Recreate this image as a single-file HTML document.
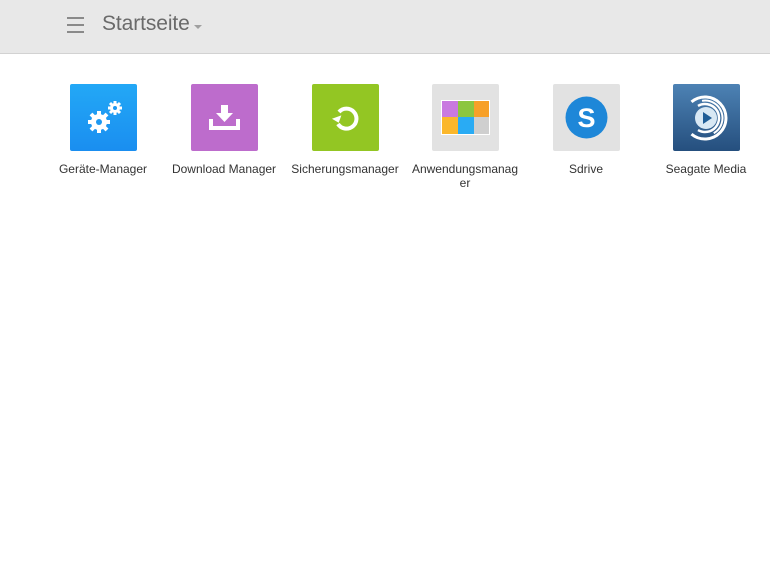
<!DOCTYPE html>
<html><head><meta charset="utf-8"><style>
*{margin:0;padding:0;box-sizing:border-box}
body{width:770px;height:578px;background:#fff;font-family:"Liberation Sans",Arial,sans-serif;overflow:hidden;position:relative}
.hdr{position:absolute;left:0;top:0;width:770px;height:54px;background:#e8e8e8;border-bottom:1px solid #d2d2d2}
.hb{position:absolute;left:67px;top:17px;width:17px}
.hb i{display:block;height:2px;background:#8a8a8a;margin-bottom:5px}
.title{position:absolute;left:102px;top:12px;font-size:21px;color:#6a6a6a;letter-spacing:-0.1px}
.caret{position:absolute;left:194px;top:25px;width:0;height:0;border-left:4px solid transparent;border-right:4px solid transparent;border-top:4px solid #a0a0a0}
.app{position:absolute;top:84px;width:120px;text-align:center}
.ic{width:67px;height:67px;margin:0 auto;border-radius:2px;position:relative;overflow:hidden}
.lb{font-size:12px;color:#333;margin-top:11px;line-height:14px;width:110px;margin-left:5px;word-break:break-all}
</style></head><body>
<div class="hdr">
<div class="hb"><i></i><i></i><i></i></div>
<div class="title">Startseite</div>
<div class="caret"></div>
</div>

<div class="app" style="left:43px"><div class="ic" style="background:linear-gradient(#23a8f6,#1a8ef0)">
<svg width="67" height="67" viewBox="0 0 67 67">
<g fill="#fff"><circle cx="29" cy="38" r="8"/><g stroke="#fff" stroke-width="4" stroke-linecap="butt">
<line x1="29" y1="27" x2="29" y2="49"/><line x1="18" y1="38" x2="40" y2="38"/><line x1="21" y1="30" x2="37" y2="46"/><line x1="37" y1="30" x2="21" y2="46"/></g>
<circle cx="45" cy="24" r="5"/><g stroke="#fff" stroke-width="3"><line x1="45" y1="17" x2="45" y2="31"/><line x1="38" y1="24" x2="52" y2="24"/><line x1="40" y1="19" x2="50" y2="29"/><line x1="50" y1="19" x2="40" y2="29"/></g></g>
<circle cx="29" cy="38" r="3" fill="#1d99f2"/><circle cx="45" cy="24" r="2" fill="#1d99f2"/>
</svg></div><div class="lb">Geräte-Manager</div></div>

<div class="app" style="left:164px"><div class="ic" style="background:#bd6ccc">
<svg width="67" height="67" viewBox="0 0 67 67" fill="#fff">
<rect x="30" y="21" width="7" height="9"/><polygon points="25,29 42,29 33.5,38"/>
<path d="M18 35h4v7h23v-7h4v11H18z"/></svg></div><div class="lb">Download Manager</div></div>

<div class="app" style="left:285px"><div class="ic" style="background:#93c623">
<svg width="67" height="67" viewBox="0 0 67 67">
<path d="M27 28 A10 10 0 1 1 26 40" fill="none" stroke="#fff" stroke-width="4"/>
<polygon points="20,33 30,33 25,39" fill="#fff" transform="rotate(-20 25 34)"/></svg></div><div class="lb">Sicherungsmanager</div></div>

<div class="app" style="left:405px"><div class="ic" style="background:#e2e2e2">
<svg width="67" height="67" viewBox="0 0 67 67">
<rect x="9" y="16" width="49" height="35" fill="#fff"/>
<rect x="10" y="17" width="16" height="16" fill="#c979e0"/><rect x="26" y="17" width="16" height="16" fill="#8cc63f"/><rect x="42" y="17" width="15" height="16" fill="#f7a028"/>
<rect x="10" y="33" width="16" height="17" fill="#fbb72b"/><rect x="26" y="33" width="16" height="17" fill="#29abf4"/><rect x="42" y="33" width="15" height="17" fill="#cfcfcf"/></svg></div><div class="lb">Anwendungsmanag er</div></div>

<div class="app" style="left:526px"><div class="ic" style="background:#e2e2e2">
<svg width="67" height="67" viewBox="0 0 67 67">
<circle cx="33.5" cy="33.5" r="21" fill="#1e87d8"/>
<text x="33.5" y="43" text-anchor="middle" font-family="Liberation Sans,sans-serif" font-weight="bold" font-size="27" fill="#fff">S</text></svg></div><div class="lb">Sdrive</div></div>

<div class="app" style="left:646px"><div class="ic" style="background:linear-gradient(#4d82b4,#254f7e)">
<svg width="67" height="67" viewBox="0 0 67 67" fill="none" stroke="#fff">
<circle cx="33" cy="34" r="11" fill="#d8e8f4" stroke="none"/>
<polygon points="30,28 30,40 39,34" fill="#1f5d96" stroke="none"/>
<path d="M25 21.9 A14 14 0 1 1 25 46.1" stroke-width="2.5"/>
<path d="M29 16.8 A17.5 17.5 0 0 1 40.75 49.2" stroke-width="2"/>
<path d="M18.5 17.9 A21 21 0 1 1 18.5 50.1" stroke-width="3"/></svg></div><div class="lb">Seagate Media</div></div>
</body></html>
